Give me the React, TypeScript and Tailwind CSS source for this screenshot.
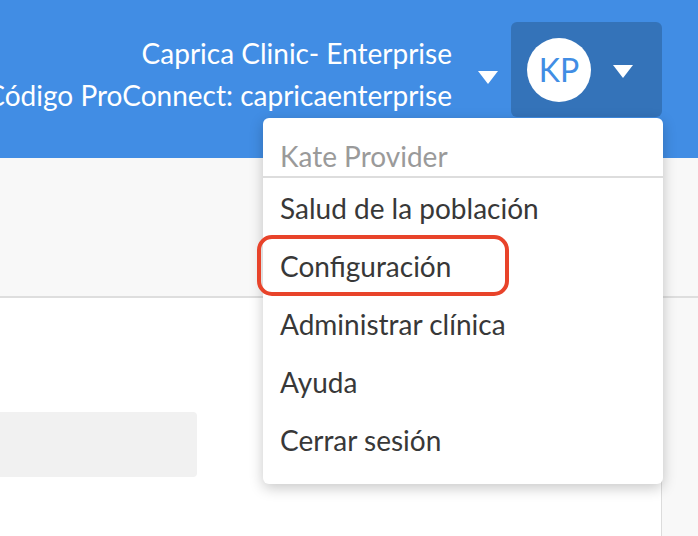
import React from 'react';

const menuItems = ['Salud de la población', 'Configuración', 'Administrar clínica', 'Ayuda', 'Cerrar sesión'];

const Caret = () => (
    <svg width="20" height="13" viewBox="0 0 20 13" className="block">
        <path d="M0 0 H20 L10 13 Z" fill="#ffffff" />
    </svg>
);

export default function App() {
    return (
        <div className="relative w-[698px] h-[536px] overflow-hidden bg-[#f8f8f8] font-['Lato','Liberation_Sans',sans-serif]">
            {/* barra superior */}
            <header className="h-[158px] bg-[#418de4] flex justify-end items-start pt-[22px] pr-[36px]">
                <div className="shrink-0 mt-[10px] text-right text-white text-[28px] leading-[42px] whitespace-nowrap">
                    <div>Caprica Clinic- Enterprise</div>
                    <div>Código ProConnect: capricaenterprise</div>
                </div>
                <div className="shrink-0 ml-[26px] mt-[49px]">
                    <Caret />
                </div>
                <div className="shrink-0 ml-[13px] w-[151px] h-[95px] rounded-md bg-[#3473b9] flex items-center pl-[16px]">
                    <div className="shrink-0 w-[64px] h-[64px] rounded-full bg-white flex items-center justify-center text-[#418de4] text-[32px]">
                        KP
                    </div>
                    <div className="shrink-0 ml-[22px] mt-[4px]">
                        <Caret />
                    </div>
                </div>
            </header>

            {/* contenido */}
            <div className="h-[140px] border-b-2 border-[#dedede]" />
            <div className="w-[662px] h-[240px] bg-white border-r border-[#dcdcdc] pt-[114px]">
                <div className="w-[197px] h-[65px] bg-[#f1f1f1] rounded-r-sm" />
            </div>

            {/* menú desplegable */}
            <div className="absolute left-[263px] top-[118px] w-[400px] h-[366px] rounded-md bg-white shadow-[0_4px_14px_rgba(0,0,0,0.22)]">
                <div className="h-[60px] pt-[21px] pl-[17px] text-[28px] leading-[34px] text-[#9a9a9a] border-b-2 border-[#dddddd]">
                    Kate Provider
                </div>
                <ul className="pt-[1px]">
                    {menuItems.map((item) => (
                        <li key={item} className="h-[58px] leading-[58px] pl-[17px] text-[28px] text-[#383838]">
                            {item}
                        </li>
                    ))}
                </ul>
            </div>

            {/* resaltado */}
            <div className="absolute left-[257px] top-[235px] w-[252px] h-[61px] rounded-[15px] border-4 border-[#e8432a]" />
        </div>
    );
}
